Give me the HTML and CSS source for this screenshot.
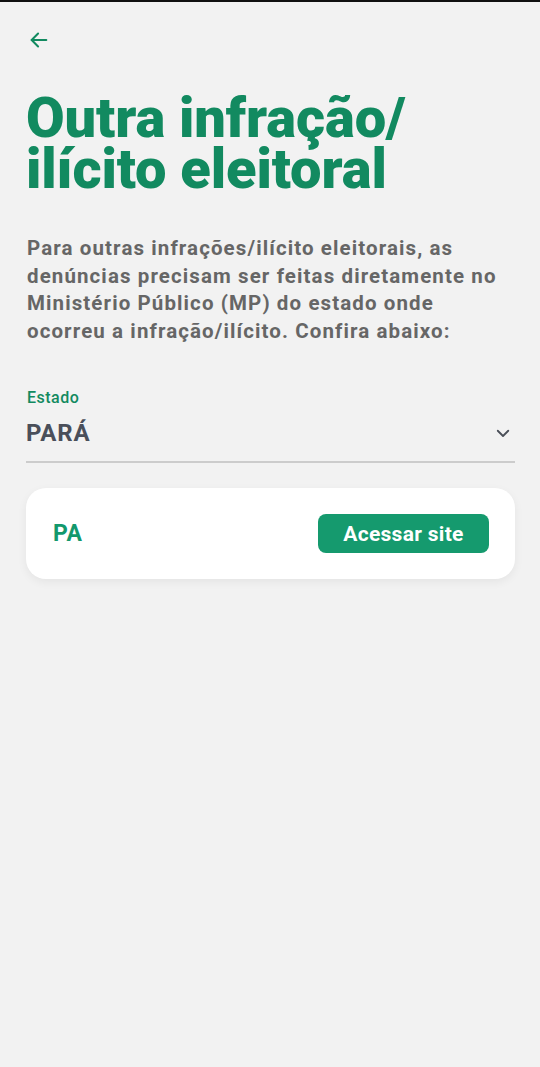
FILE: index.html
```html
<!DOCTYPE html>
<html lang="pt-BR">
<head>
<meta charset="UTF-8">
<title>Outra infração/ilícito eleitoral</title>
<link rel="stylesheet" href="styles.css">
</head>
<body>
  <div class="topline"></div>
  <main class="page">
    <button class="back" type="button" aria-label="Voltar">
      <svg width="22" height="22" viewBox="0 0 24 24" fill="none" stroke="#128a60" stroke-width="2.2" stroke-linecap="round" stroke-linejoin="round">
        <path d="M20 12H4"/>
        <path d="M11 5l-7 7 7 7"/>
      </svg>
    </button>

    <h1 class="title">Outra infração/<br>ilícito eleitoral</h1>

    <p class="intro">Para outras infrações/ilícito eleitorais, as denúncias precisam ser feitas diretamente no Ministério Público (MP) do estado onde ocorreu a infração/ilícito. Confira abaixo:</p>

    <div class="field">
      <label class="field-label">Estado</label>
      <div class="field-row">
        <span class="field-value">PARÁ</span>
        <svg width="18" height="18" viewBox="0 0 24 24" fill="none" stroke="#4a4f58" stroke-width="2.4" stroke-linecap="round" stroke-linejoin="round">
          <path d="M5 9l7 7 7-7"/>
        </svg>
      </div>
    </div>

    <div class="card">
      <span class="uf">PA</span>
      <button class="btn" type="button">Acessar site</button>
    </div>
  </main>
</body>
</html>
```

FILE: styles.css
```css
html, body {
    margin: 0;
    padding: 0;
}
body {
    background-color: #f2f2f2;
    font-family: Roboto, "Liberation Sans", sans-serif;
    min-height: 1067px;
}
.topline {
    height: 2px;
    background-color: #111111;
}
.page {
    padding: 0 25px 0 26px;
}
.back {
    display: block;
    margin: 27px 0 0 1px;
    padding: 0;
    border: none;
    background: none;
    width: 24px;
    height: 24px;
}
.title {
    margin: 40px 0 0 0;
    font-size: 56px;
    font-weight: 900;
    line-height: 51px;
    letter-spacing: -0.1px;
    color: #128a60;
}
.intro {
    margin: 40px 0 0 1px;
    font-size: 20.5px;
    font-weight: 700;
    line-height: 27.5px;
    letter-spacing: 1.1px;
    color: #666666;
}
.field {
    margin-top: 43px;
    border-bottom: 2px solid #cccccc;
    padding-bottom: 14px;
}
.field-label {
    display: block;
    font-size: 16px;
    font-weight: 500;
    letter-spacing: 0.5px;
    color: #128a60;
    margin-left: 1px;
}
.field-row {
    display: flex;
    align-items: center;
    justify-content: space-between;
    margin-top: 12px;
    padding-right: 3px;
}
.field-value {
    font-size: 24px;
    font-weight: 700;
    letter-spacing: 0.8px;
    color: #4a4f5a;
}
.card {
    margin-top: 25px;
    background-color: #ffffff;
    border-radius: 20px;
    box-shadow: 0 3px 10px rgba(0, 0, 0, 0.06);
    height: 91px;
    display: flex;
    align-items: center;
    justify-content: space-between;
    padding: 0 26px 0 27px;
}
.uf {
    font-size: 23px;
    font-weight: 700;
    letter-spacing: 0.6px;
    color: #13986c;
}
.btn {
    border: none;
    border-radius: 8px;
    background-color: #159a6e;
    color: #ffffff;
    font-family: Roboto, "Liberation Sans", sans-serif;
    font-size: 21px;
    font-weight: 700;
    letter-spacing: 0.3px;
    height: 39px;
    width: 171px;
    padding: 0;
}
```
